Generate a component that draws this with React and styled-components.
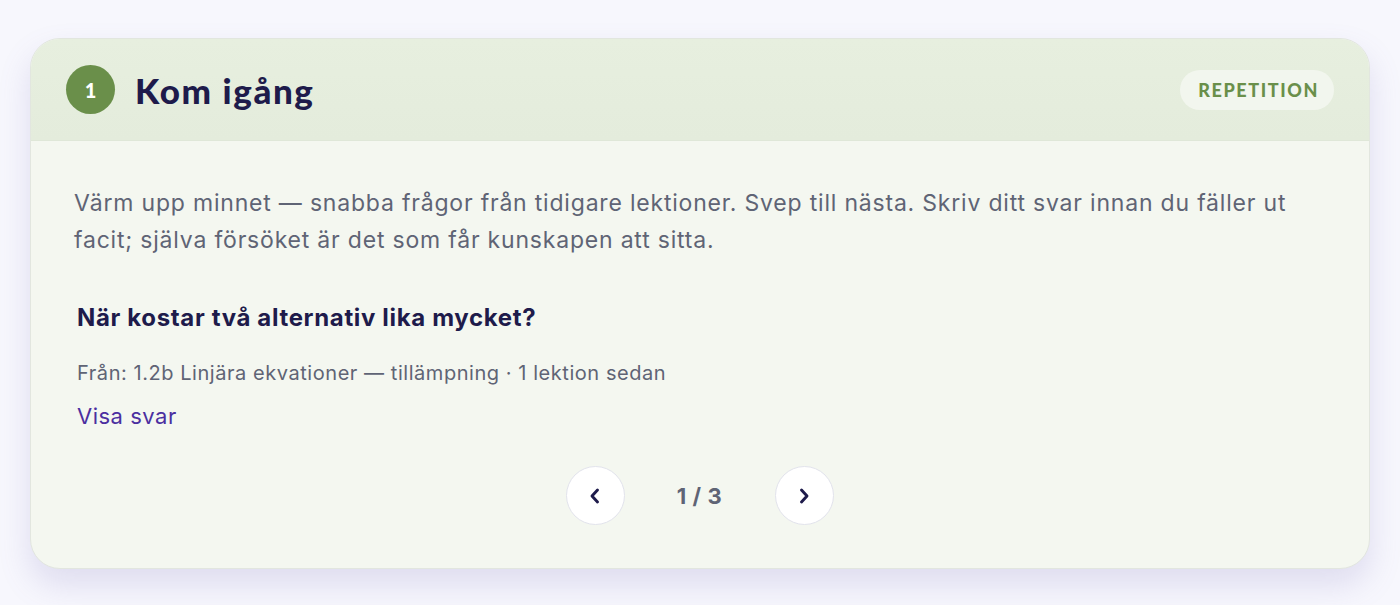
import React, { useState } from "react";
import styled, { createGlobalStyle } from "styled-components";

const GlobalStyle = createGlobalStyle`
  html, body {
    margin: 0;
    padding: 0;
    background: #f7f7fd;
    font-family: "Inter", "Noto Sans", sans-serif;
  }
`;

const Page = styled.div`
  padding: 38px 30px 37px 30px;
`;

const Card = styled.section`
  border-radius: 30px;
  overflow: hidden;
  background: #f4f7f0;
  border: 1px solid #e2e6df;
  box-shadow: 0 16px 32px rgba(110, 100, 180, 0.18);
`;

const Header = styled.header`
  height: 102px;
  box-sizing: border-box;
  display: flex;
  align-items: center;
  justify-content: space-between;
  padding: 0 35px 0 35px;
  background: linear-gradient(#e7efdf, #e4ecdc);
  border-bottom: 1px solid #dfe7d8;
`;

const TitleGroup = styled.div`
  display: flex;
  align-items: center;
  gap: 20px;
`;

const StepBadge = styled.div`
  width: 49px;
  height: 49px;
  border-radius: 50%;
  background: #6a8f4a;
  color: #fff;
  display: flex;
  align-items: center;
  justify-content: center;
  font-family: "Lato", sans-serif;
  font-weight: 900;
  font-size: 20px;
`;

const Title = styled.h2`
  margin: 0;
  font-family: "Lato", sans-serif;
  font-weight: 900;
  font-size: 35px;
  color: #1e1b4b;
  letter-spacing: 1.6px;
`;

const Tag = styled.span`
  background: #f2f6ee;
  color: #6a8f4a;
  border-radius: 20px;
  padding: 9px 15px 9px 18px;
  font-family: "Lato", sans-serif;
  font-weight: 900;
  font-size: 18px;
  letter-spacing: 1.6px;
`;

const Body = styled.div`
  padding: 44px 44px 43px 43px;
  display: flex;
  flex-direction: column;
`;

const Intro = styled.p`
  margin: 0;
  font-size: 23px;
  line-height: 37px;
  letter-spacing: 0.8px;
  color: #5f6475;
`;

const Question = styled.div`
  margin-top: 43px;
  padding: 0 3px;
  display: flex;
  flex-direction: column;
`;

const QuestionText = styled.h3`
  margin: 0;
  font-size: 24px;
  line-height: 32px;
  font-weight: 700;
  letter-spacing: 0.65px;
  color: #1e1b4b;
`;

const Meta = styled.div`
  margin-top: 26px;
  font-size: 20px;
  line-height: 26px;
  letter-spacing: 0.55px;
  color: #5f6475;
`;

const Reveal = styled.button`
  margin-top: 16px;
  align-self: flex-start;
  background: none;
  border: none;
  padding: 0;
  font-family: inherit;
  font-size: 22px;
  line-height: 28px;
  letter-spacing: 0.5px;
  color: #4b2fa0;
  cursor: pointer;
`;

const Nav = styled.div`
  margin-top: 36px;
  display: flex;
  align-items: center;
  justify-content: center;
  gap: 50px;
`;

const NavButton = styled.button`
  width: 59px;
  height: 59px;
  border-radius: 50%;
  background: #fff;
  border: 1.5px solid #e2e3ec;
  display: flex;
  align-items: center;
  justify-content: center;
  padding: 0;
  cursor: pointer;
  color: #1e1b4b;
`;

const Counter = styled.span`
  font-size: 22px;
  font-weight: 700;
  letter-spacing: 0.6px;
  color: #5f6475;
  min-width: 50px;
  text-align: center;
`;

const Chevron = ({ dir }) => (
  <svg width="14" height="18" viewBox="0 0 14 18" fill="none">
    <path
      d={dir === "left" ? "M9.5 3 L4 9 L9.5 15" : "M4.5 3 L10 9 L4.5 15"}
      stroke="currentColor"
      strokeWidth="2.9"
      strokeLinecap="round"
      strokeLinejoin="round"
    />
  </svg>
);

const questions = [
  {
    text: "När kostar två alternativ lika mycket?",
    from: "Från: 1.2b Linjära ekvationer — tillämpning · 1 lektion sedan",
  },
  {
    text: "Vad är lutningen för en rät linje?",
    from: "Från: 1.2a Linjära funktioner · 2 lektioner sedan",
  },
  {
    text: "Hur löser du en ekvation med parenteser?",
    from: "Från: 1.1 Ekvationer · 3 lektioner sedan",
  },
];

export default function App() {
  const [index, setIndex] = useState(0);
  const q = questions[index];
  return (
    <>
      <GlobalStyle />
      <Page>
        <Card>
          <Header>
            <TitleGroup>
              <StepBadge>1</StepBadge>
              <Title>Kom igång</Title>
            </TitleGroup>
            <Tag>REPETITION</Tag>
          </Header>
          <Body>
            <Intro>
              Värm upp minnet — snabba frågor från tidigare lektioner. Svep till
              nästa. Skriv ditt svar innan du fäller ut facit; själva försöket
              är det som får kunskapen att sitta.
            </Intro>
            <Question>
              <QuestionText>{q.text}</QuestionText>
              <Meta>{q.from}</Meta>
              <Reveal>Visa svar</Reveal>
            </Question>
            <Nav>
              <NavButton
                aria-label="Föregående"
                onClick={() => setIndex((i) => (i + questions.length - 1) % questions.length)}
              >
                <Chevron dir="left" />
              </NavButton>
              <Counter>
                {index + 1} / {questions.length}
              </Counter>
              <NavButton
                aria-label="Nästa"
                onClick={() => setIndex((i) => (i + 1) % questions.length)}
              >
                <Chevron dir="right" />
              </NavButton>
            </Nav>
          </Body>
        </Card>
      </Page>
    </>
  );
}
